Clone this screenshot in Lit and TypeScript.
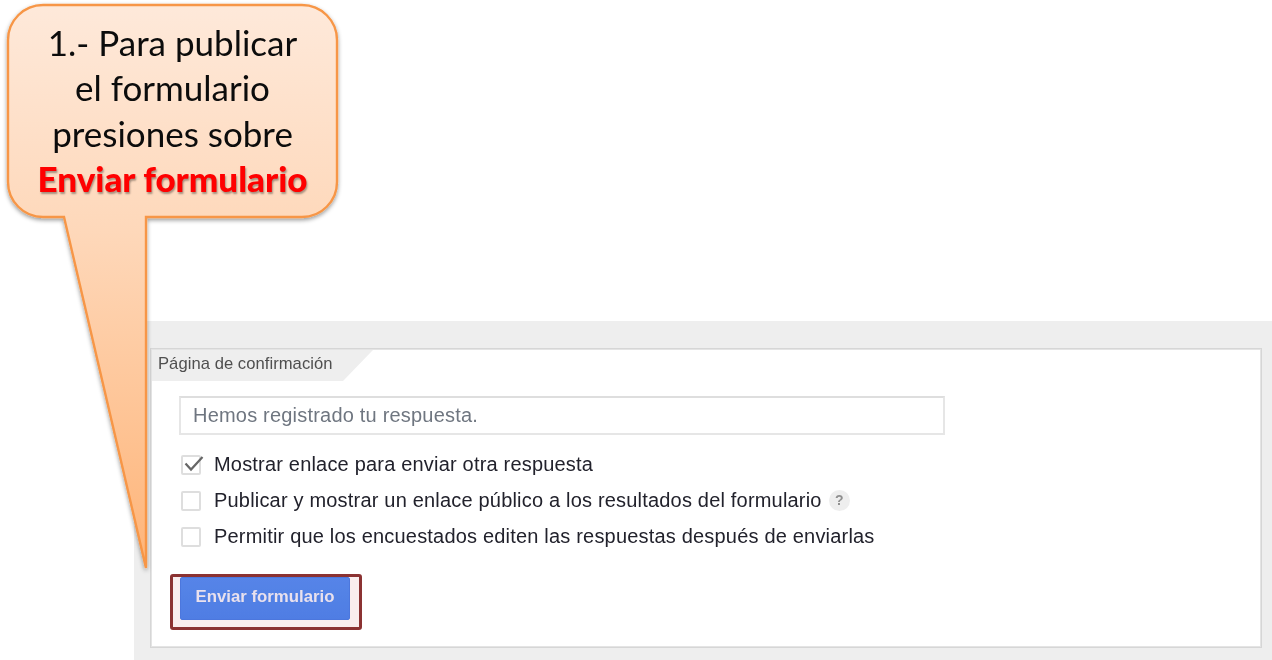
import { LitElement, html, css } from "lit";
import { customElement } from "lit/decorators.js";

const rows = [
  { label: "Mostrar enlace para enviar otra respuesta", checked: true, help: false },
  { label: "Publicar y mostrar un enlace público a los resultados del formulario", checked: false, help: true },
  { label: "Permitir que los encuestados editen las respuestas después de enviarlas", checked: false, help: false },
];

@customElement("app-root")
export class AppRoot extends LitElement {
  static styles = css`
    :host { display: block; position: relative; width: 1272px; height: 660px; background: #fff; overflow: hidden; font-family: "Liberation Sans", Arial, sans-serif; }
    .page { padding-top: 321px; padding-left: 134px; height: 339px; }
    .panel { background: #eeeeee; height: 339px; box-sizing: border-box; padding: 27px 10px 12px 16px; }
    .card { background: #fff; height: 300px; box-sizing: border-box; border: 1px solid #d6d6d6; box-shadow: 0 0 0 1px #e4e4e4 inset; display: flex; flex-direction: column; align-items: flex-start; filter: blur(0.4px); }
    .tab { background: #eeeeee; width: 221px; height: 31px; margin-top: 1px; margin-left: 1px; box-sizing: border-box; padding: 5px 0 0 6px; font-size: 16.6px; letter-spacing: .05px; line-height: 18px; color: #4f4f4f; clip-path: polygon(0 0, 100% 0, 191px 100%, 0 100%); white-space: nowrap; }
    .input { margin: 15px 0 0 28px; width: 766px; height: 39px; box-sizing: border-box; border: 2px solid #e6e6e6; border-top-color: #dedede; padding-left: 12px; display: flex; align-items: center; font-size: 20px; letter-spacing: .2px; color: #6f7680; }
    .rows { margin: 17px 0 0 30px; display: flex; flex-direction: column; gap: 12px; }
    .row { display: flex; align-items: center; height: 24px; font-size: 20px; letter-spacing: .19px; color: #22222c; white-space: nowrap; }
    .box { width: 20px; height: 20px; box-sizing: border-box; border: 2px solid #dedede; border-radius: 2px; margin-right: 13px; margin-top: 1px; background: #fff; position: relative; flex: none; }
    .box svg { position: absolute; left: -1px; top: -4px; }
    .help { width: 21px; height: 21px; border-radius: 50%; background: #eeeeee; color: #8f8f8f; margin-left: 7px; font-size: 14px; font-weight: bold; display: flex; align-items: center; justify-content: center; flex: none; letter-spacing: 0; }
    .btn { margin: 29px 0 0 29px; width: 170px; height: 43px; box-sizing: border-box; background: linear-gradient(#4a8bfa, #4283f4); border: 1px solid #3f7cee; border-radius: 2px; color: #eef2ff; font-size: 16.8px; font-weight: bold; display: flex; align-items: center; justify-content: center; padding-bottom: 3px; }
    .highlight { position: absolute; left: 170px; top: 574px; width: 192px; height: 56px; box-sizing: border-box; border: 3px solid #8b3232; border-radius: 3px; background: rgba(192, 80, 77, 0.1); }
    .callout { position: absolute; left: 0; top: 0; width: 345px; height: 580px; display: block; }
    .say { position: absolute; left: 8px; top: 20px; width: 329px; text-align: center; font-family: Lato, "Open Sans", sans-serif; font-size: 35px; line-height: 45.4px; color: #0c0c0c; filter: blur(0.3px); white-space: nowrap; }
    .say b { color: #ff0000; font-weight: 900; font-size: 35px; text-shadow: 1px 2px 2px rgba(0,0,0,.35); }
  `;

  render() {
    return html`
      <div class="page">
        <div class="panel">
          <div class="card">
            <div class="tab">Página de confirmación</div>
            <div class="input">Hemos registrado tu respuesta.</div>
            <div class="rows">
              ${rows.map((r) => html`
                <div class="row">
                  <span class="box">${r.checked
                    ? html`<svg width="22" height="22" viewBox="0 0 22 22"><path d="M3.5 10.5 L9 16.5 L20.5 4" fill="none" stroke="#666" stroke-width="2.2"/></svg>`
                    : ""}</span>
                  ${r.label}
                  ${r.help ? html`<span class="help">?</span>` : ""}
                </div>`)}
            </div>
            <div class="btn">Enviar formulario</div>
          </div>
        </div>
      </div>
      <div class="highlight"></div>
      <svg class="callout" viewBox="0 0 345 580">
        <defs>
          <linearGradient id="g" gradientUnits="userSpaceOnUse" x1="0" y1="5" x2="0" y2="568">
            <stop offset="0" stop-color="#fee9da"/>
            <stop offset="0.4" stop-color="#fed8ba"/>
            <stop offset="1" stop-color="#feb478"/>
          </linearGradient>
          <filter id="s" x="-5%" y="-5%" width="110%" height="110%">
            <feDropShadow dx="0" dy="2" stdDeviation="2" flood-color="#000" flood-opacity=".4"/>
          </filter>
        </defs>
        <path filter="url(#s)" fill="url(#g)" stroke="#f79646" stroke-width="2.4"
          d="M43 5 H302 A35 35 0 0 1 337 40 V182 A35 35 0 0 1 302 217 H146 V568 L64 217 H43 A35 35 0 0 1 8 182 V40 A35 35 0 0 1 43 5 Z"/>
      </svg>
      <div class="say">1.- Para publicar<br>el formulario<br>presiones sobre<br><b>Enviar formulario</b></div>
    `;
  }
}
